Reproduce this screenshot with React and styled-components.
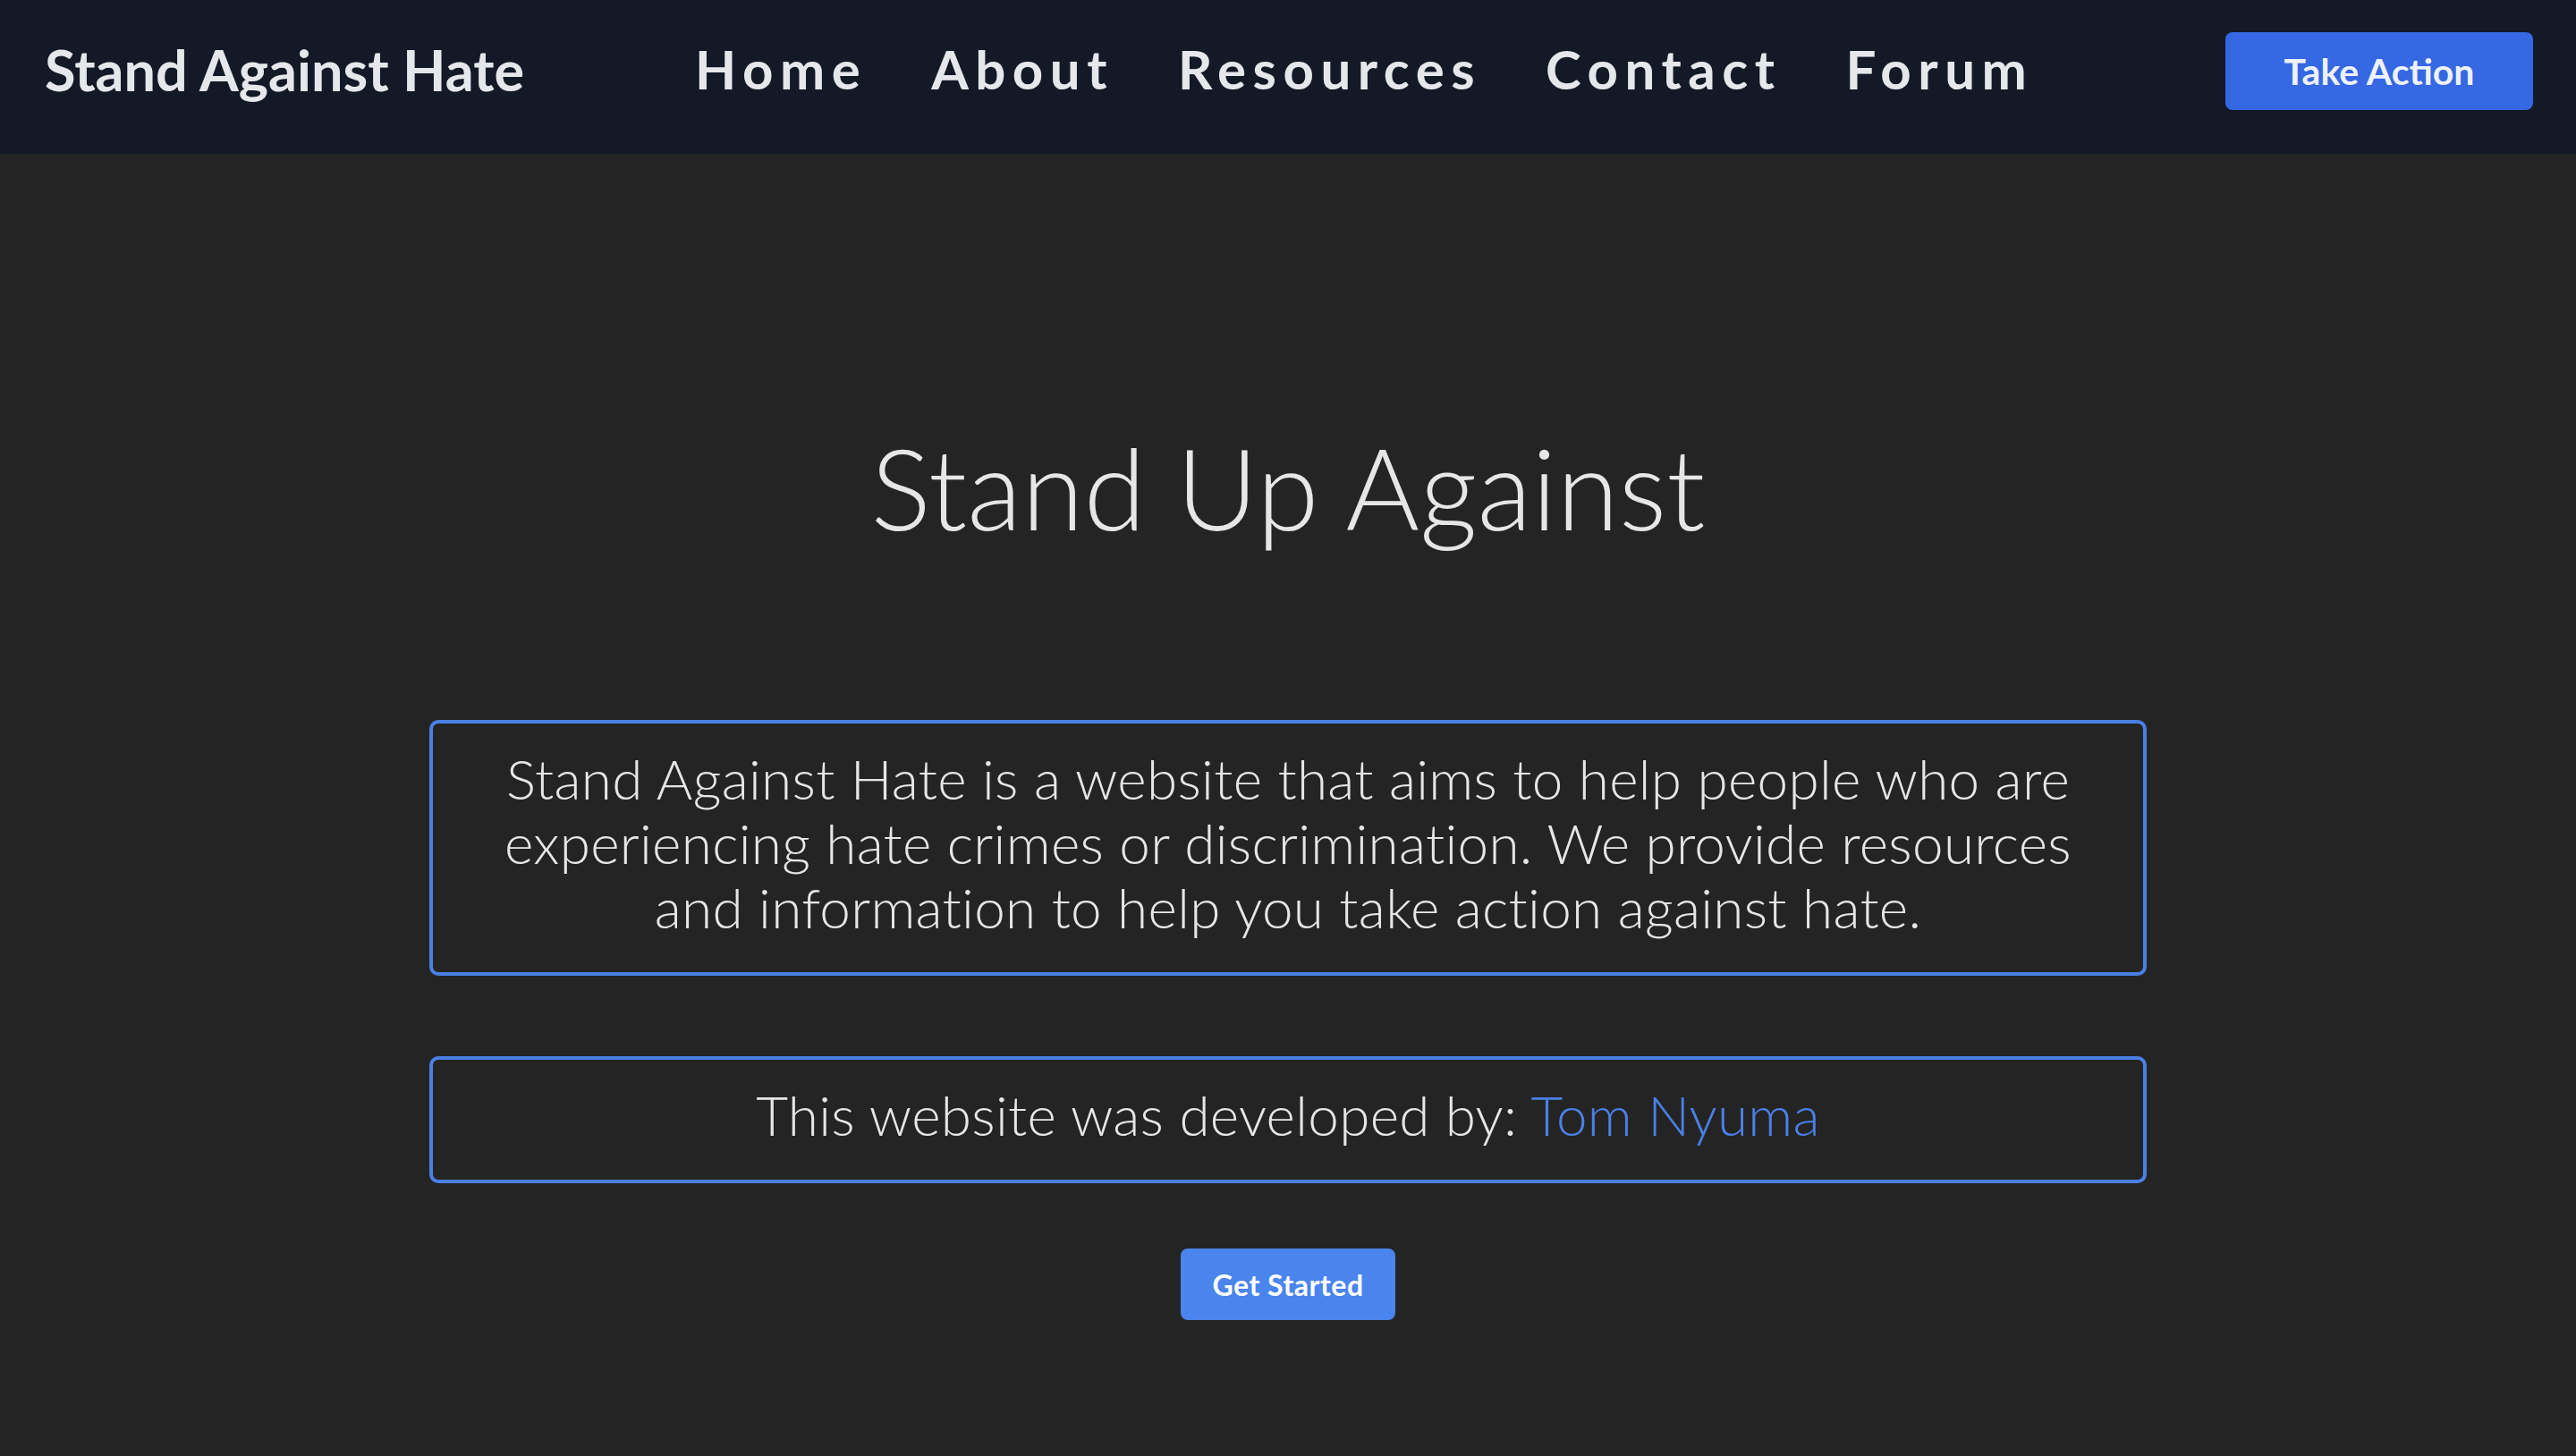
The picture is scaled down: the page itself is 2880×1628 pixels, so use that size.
import React from 'react';
import styled, { createGlobalStyle } from 'styled-components';

const GlobalStyle = createGlobalStyle`
  html, body {
    margin: 0;
    padding: 0;
    background: #242424;
  }
  body {
    font-family: Lato, "Open Sans", sans-serif;
    color: #e6e6e6;
  }
  * {
    box-sizing: border-box;
  }
`;

const Page = styled.div`
  min-height: 1628px;
  background: #242424;
`;

const NavBar = styled.nav`
  height: 172px;
  background: #131927;
  display: flex;
  align-items: center;
  padding: 0 48px 14px 50px;
`;

const Logo = styled.a`
  font-size: 63px;
  font-weight: 700;
  color: #e5e7eb;
  text-decoration: none;
  margin: -4px 191px 0 0;
`;

const NavLinks = styled.ul`
  display: flex;
  gap: 72px;
  list-style: none;
  margin: -4px 0 0;
  padding: 0;
`;

const NavLink = styled.a`
  font-size: 60px;
  font-weight: 700;
  letter-spacing: 0.125em;
  color: #e5e7eb;
  text-decoration: none;
`;

const ActionButton = styled.button`
  margin-left: auto;
  width: 344px;
  height: 87px;
  border: none;
  border-radius: 8px;
  background: #3568e2;
  color: #eef2ff;
  font-family: inherit;
  font-size: 41px;
  font-weight: 700;
  cursor: pointer;
`;

const Hero = styled.main`
  display: flex;
  flex-direction: column;
  align-items: center;
  padding-top: 297px;
`;

const Title = styled.h1`
  margin: 0;
  font-size: 126px;
  font-weight: 300;
  line-height: 1.2;
  color: #e6e6e6;
`;

const Card = styled.div`
  width: 1920px;
  margin-top: ${(p) => p.$top || 0}px;
  padding: 25px 64px 37px;
  border: 4px solid #4a80e6;
  border-radius: 10px;
  text-align: center;
  font-size: 62px;
  font-weight: 300;
  letter-spacing: 0.3px;
  line-height: 72px;
  color: #e6e6e6;
`;

const Highlight = styled.span`
  color: #4a80e6;
`;

const StartButton = styled.button`
  margin-top: 73px;
  height: 80px;
  padding: 0 35px;
  border: none;
  border-radius: 8px;
  background: #4a84ed;
  color: #ffffff;
  font-family: inherit;
  font-size: 32px;
  font-weight: 700;
  letter-spacing: 0.5px;
  cursor: pointer;
`;

const links = ['Home', 'About', 'Resources', 'Contact', 'Forum'];

export default function App() {
  return (
    <Page>
      <GlobalStyle />
      <NavBar>
        <Logo href="#">Stand Against Hate</Logo>
        <NavLinks>
          {links.map((l) => (
            <li key={l}>
              <NavLink href="#">{l}</NavLink>
            </li>
          ))}
        </NavLinks>
        <ActionButton>Take Action</ActionButton>
      </NavBar>
      <Hero>
        <Title>Stand Up Against</Title>
        <Card $top={185}>
          Stand Against Hate is a website that aims to help people who are experiencing hate
          crimes or discrimination. We provide resources and information to help you take action
          against hate.
        </Card>
        <Card $top={90}>
          This website was developed by: <Highlight>Tom Nyuma</Highlight>
        </Card>
        <StartButton>Get Started</StartButton>
      </Hero>
    </Page>
  );
}
